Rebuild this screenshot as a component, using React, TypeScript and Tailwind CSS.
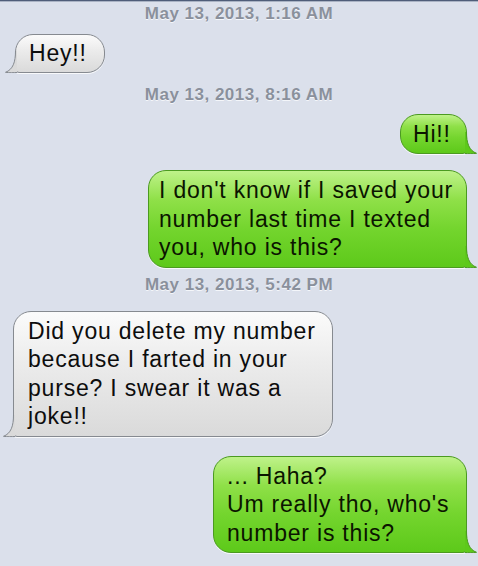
import React from "react";

const font = "font-['Liberation_Sans','Helvetica_Neue',Arial,sans-serif]";

function Stamp({ text, className }: { text: string; className: string }) {
  return (
    <div
      className={`text-center text-[17px] leading-[20px] font-bold tracking-[0.5px] text-[#8a909c] [text-shadow:0_1px_0_#f4f6fa] ${className}`}
    >
      {text}
    </div>
  );
}

function Tail({ side, fill, stroke }: { side: "left" | "right"; fill: string; stroke: string }) {
  const pos = side === "right" ? "-right-[10px]" : "-left-[10px] -scale-x-100";
  return (
    <svg
      className={`absolute bottom-0 ${pos}`}
      width="12"
      height="22"
      viewBox="0 0 12 22"
    >
      <path d="M0 0 L1.5 0 C1.5 11 4 18.5 11.5 21.3 C7 22 3.5 21.5 0 21.5 Z" fill={fill} />
      <path
        d="M1.5 0 C1.5 11 4 18.5 11.5 21.3 C7 22 3.5 21.5 0 21.5"
        fill="none"
        stroke={stroke}
        strokeWidth="1"
      />
    </svg>
  );
}

function Bubble({
  side,
  className,
  children,
}: {
  side: "left" | "right";
  className: string;
  children: React.ReactNode;
}) {
  const green = side === "right";
  return (
    <div
      className={`relative ${green ? "self-end mr-[11px]" : "self-start"} ${className}`}
    >
      <div
        className={`border text-[23px] leading-[28.5px] tracking-[0.8px] whitespace-nowrap shadow-[0_1px_0_rgba(255,255,255,0.8)] ${
          green
            ? "rounded-[18px] rounded-br-[4px] border-[#4b9a20] text-[#0b1500] bg-[linear-gradient(to_bottom,#bff28a_0%,#8fe048_30%,#74d52e_60%,#5dc91a_100%)]"
            : "rounded-[18px] rounded-bl-[4px] border-[#868a90] text-[#0d0d0d] bg-[linear-gradient(to_bottom,#fbfbfb_0%,#ececec_40%,#dadada_100%)]"
        }`}
      >
        {children}
      </div>
      {green ? (
        <Tail side="right" fill="#5dc91a" stroke="#4b9a20" />
      ) : (
        <Tail side="left" fill="#dadada" stroke="#868a90" />
      )}
    </div>
  );
}

export default function App() {
  return (
    <div className={`w-[478px] h-[566px] overflow-hidden bg-[#dbe0eb] ${font}`}>
      <div className="h-[1px] bg-[#4f5d79]" />
      <div className="h-[1px] bg-[#aab3c4]" />
      <div className="flex flex-col">
        <Stamp text="May 13, 2013, 1:16 AM" className="mt-[2px]" />

        <Bubble side="left" className="mt-[10px] ml-[15px]">
          <div className="w-[88px] py-[4px] pl-[13px]">Hey!!</div>
        </Bubble>

        <Stamp text="May 13, 2013, 8:16 AM" className="mt-[12px]" />

        <Bubble side="right" className="mt-[9px]">
          <div className="w-[65px] py-[5px] pl-[12px]">Hi!!</div>
        </Bubble>

        <Bubble side="right" className="mt-[16px]">
          <div className="w-[317px] py-[5px] pl-[10px]">
            I don't know if I saved your
            <br />
            number last time I texted
            <br />
            you, who is this?
          </div>
        </Bubble>

        <Stamp text="May 13, 2013, 5:42 PM" className="mt-[7px]" />

        <Bubble side="left" className="mt-[16px] ml-[13px]">
          <div className="w-[318px] py-[5px] pl-[14px]">
            Did you delete my number
            <br />
            because I farted in your
            <br />
            purse? I swear it was a
            <br />
            joke!!
          </div>
        </Bubble>

        <Bubble side="right" className="mt-[19px]">
          <div className="w-[252px] py-[5px] pl-[13px]">
            ... Haha?
            <br />
            Um really tho, who's
            <br />
            number is this?
          </div>
        </Bubble>
      </div>
    </div>
  );
}
